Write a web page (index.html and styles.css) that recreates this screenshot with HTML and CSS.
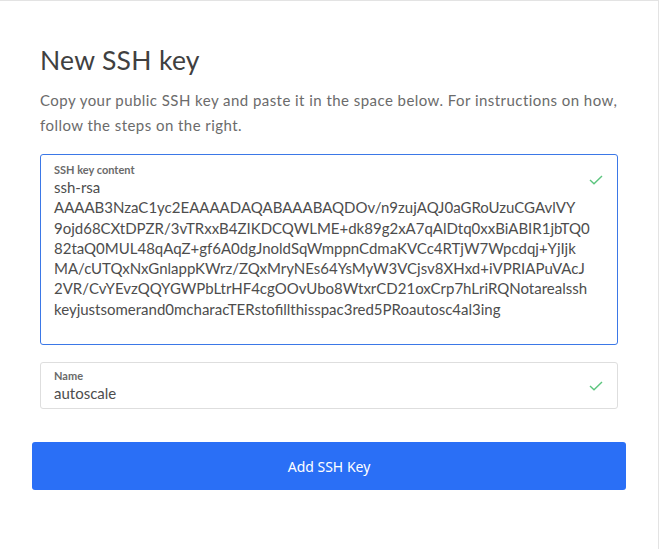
FILE: index.html
```html
<!DOCTYPE html>
<html lang="en">
<head>
<meta charset="utf-8">
<title>New SSH key</title>
<link rel="stylesheet" href="styles.css">
</head>
<body>
<main class="page">
  <h1 class="title">New SSH key</h1>
  <p class="intro">Copy your public SSH key and paste it in the space below. For instructions on how, follow the steps on the right.</p>

  <div class="field field-key">
    <div class="field-body">
      <div class="field-label">SSH key content</div>
      <div class="key-text">
        <span class="key-line">ssh-rsa</span>
        <span class="key-line">AAAAB3NzaC1yc2EAAAADAQABAAABAQDOv/n9zujAQJ0aGRoUzuCGAvlVY</span>
        <span class="key-line">9ojd68CXtDPZR/3vTRxxB4ZIKDCQWLME+dk89g2xA7qAlDtq0xxBiABIR1jbTQ0</span>
        <span class="key-line">82taQ0MUL48qAqZ+gf6A0dgJnoldSqWmppnCdmaKVCc4RTjW7Wpcdqj+YjIjk</span>
        <span class="key-line">MA/cUTQxNxGnlappKWrz/ZQxMryNEs64YsMyW3VCjsv8XHxd+iVPRIAPuVAcJ</span>
        <span class="key-line">2VR/CvYEvzQQYGWPbLtrHF4cgOOvUbo8WtxrCD21oxCrp7hLriRQNotarealssh</span>
        <span class="key-line">keyjustsomerand0mcharacTERstofillthisspac3red5PRoautosc4al3ing</span>
      </div>
    </div>
    <svg class="check check-top" width="14" height="10" viewBox="0 0 14 10" aria-hidden="true"><path d="M1 5 L5 8.8 L13 1" fill="none" stroke="#5cc57e" stroke-width="1.4"/></svg>
  </div>

  <div class="field field-name">
    <div class="field-body">
      <div class="field-label">Name</div>
      <div class="field-value">autoscale</div>
    </div>
    <svg class="check" width="14" height="10" viewBox="0 0 14 10" aria-hidden="true"><path d="M1 5 L5 8.8 L13 1" fill="none" stroke="#5cc57e" stroke-width="1.4"/></svg>
  </div>

  <button class="submit" type="button">Add SSH Key</button>
</main>
</body>
</html>
```

FILE: styles.css
```css
* { box-sizing: border-box; }

html, body {
  margin: 0;
  padding: 0;
  background: #ffffff;
}

body {
  font-family: "Lato", "Open Sans", sans-serif;
  color: #444;
}

.page {
  width: 659px;
  height: 549px;
  border-top: 1px solid #e3e3e3;
  border-right: 1px solid #e3e3e3;
  padding: 43px 40px 0 40px;
  display: flex;
  flex-direction: column;
}

.title {
  margin: 0;
  font-size: 26.5px;
  line-height: 32px;
  font-weight: 400;
  letter-spacing: 0.3px;
  color: #404040;
}

.intro {
  margin: 12px 0 0 0;
  font-size: 15px;
  line-height: 25px;
  letter-spacing: 0.45px;
  color: #6b6b6b;
}

.field {
  display: flex;
  align-items: center;
  border: 1px solid #dedede;
  border-radius: 3px;
  padding: 0 14px 0 13px;
}

.field-key {
  margin-top: 16px;
  height: 191px;
  align-items: flex-start;
  border-color: #3b78e7;
  padding-top: 8px;
}

.field-name {
  margin-top: 17px;
  height: 47px;
  padding-top: 1px;
}

.field-body {
  flex: 1;
  min-width: 0;
}

.field-label {
  font-size: 11px;
  line-height: 14px;
  font-weight: 700;
  color: #6a6a6a;
}

.key-text {
  font-size: 15px;
  line-height: 20.3px;
  color: #4d4d4d;
}

.key-line {
  display: block;
  white-space: nowrap;
}

.field-value {
  font-size: 15px;
  line-height: 20px;
  color: #4d4d4d;
}

.check {
  flex: none;
}

.check-top {
  margin-top: 12px;
}

.submit {
  margin: 33px -8px 0 -8px;
  height: 48px;
  border: none;
  border-radius: 3px;
  background: #2a6ff6;
  color: #ffffff;
  font-family: "Noto Sans", sans-serif;
  font-size: 14px;
  cursor: pointer;
}
```
